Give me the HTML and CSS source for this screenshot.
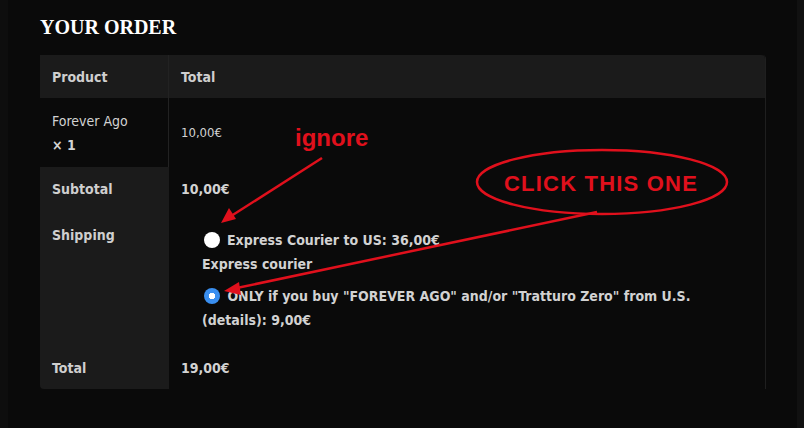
FILE: index.html
```html
<!DOCTYPE html>
<html lang="en">

<head>
  <meta charset="UTF-8">
  <meta name="viewport" content="width=device-width, initial-scale=1.0">
  <title>Your Order</title>
  <link rel="stylesheet" href="styles.css">
</head>

<body>
  <div class="page">
    <h3 class="order-title">YOUR ORDER</h3>

    <table class="order-table">
      <thead>
        <tr>
          <th class="col-product">Product</th>
          <th class="col-total">Total</th>
        </tr>
      </thead>
      <tbody>
        <tr class="cart-item">
          <td class="product-name">Forever Ago<br><strong>&times; 1</strong></td>
          <td class="product-total">10,00€</td>
        </tr>
      </tbody>
      <tfoot>
        <tr class="subtotal">
          <th>Subtotal</th>
          <td><strong>10,00€</strong></td>
        </tr>
        <tr class="shipping">
          <th>Shipping</th>
          <td>
            <ul class="shipping-methods">
              <li>
                <span class="radio"></span>
                <label>Express Courier to US: 36,00€</label>
              </li>
              <li class="method-name">Express courier</li>
              <li>
                <span class="radio checked"></span>
                <label>ONLY if you buy "FOREVER AGO" and/or "Tratturo Zero" from U.S. (details): 9,00€</label>
              </li>
            </ul>
          </td>
        </tr>
        <tr class="order-total">
          <th>Total</th>
          <td><strong>19,00€</strong></td>
        </tr>
      </tfoot>
    </table>

    <!-- red notes drawn over the screenshot -->
    <div class="notes">
      <svg width="804" height="428" viewBox="0 0 804 428">
        <line x1="322" y1="158" x2="228" y2="218" stroke="#e0101c" stroke-width="2.5" />
        <path d="M221 223 L229 208 L236 219 Z" fill="#e0101c" />
        <ellipse cx="602" cy="182" rx="125" ry="32" fill="none" stroke="#e0101c" stroke-width="2.5" />
        <line x1="597" y1="212" x2="232" y2="289" stroke="#e0101c" stroke-width="2.5" />
        <path d="M224 291 L239 282 L241 295 Z" fill="#e0101c" />
      </svg>
      <span class="note note-ignore">ignore</span>
      <span class="note note-click">CLICK THIS ONE</span>
    </div>
  </div>
</body>

</html>
```

FILE: styles.css
```css
body,
html {
  margin: 0;
  padding: 0;
  width: 100%;
  height: 100%;
  overflow: hidden;
  background-color: #0a0a0a;
}

.page {
  position: relative;
  height: 100%;
  box-sizing: border-box;
  padding: 16px 38px 0 32px;
  border-left: 8px solid #0e0e0e;
  border-right: 7px solid #111111;
  font-family: "DejaVu Sans Condensed", "DejaVu Sans", sans-serif;
  color: #d2d2d2;
}

.order-title {
  margin: 0 0 17px;
  font-family: "Liberation Serif", serif;
  font-size: 20px;
  font-weight: bold;
  line-height: 22px;
  color: #ffffff;
}

.order-table {
  width: 726px;
  border-collapse: separate;
  border-spacing: 0;
  border-right: 1px solid #1f1f1f;
  border-radius: 0 4px 0 0;
  font-size: 14px;
}

.order-table th,
.order-table td {
  text-align: left;
  padding: 0 12px;
}

.order-table thead th {
  height: 43px;
  background-color: #1b1b1b;
  color: #cfcfcf;
}

.order-table thead th.col-total {
  border-radius: 0 4px 0 0;
}

.col-product {
  width: 104px;
  border-right: 1px solid #222222;
}

.cart-item td {
  height: 69px;
  line-height: 24px;
}

.product-name {
  padding: 3px 12px 0 8px;
  border-right: 1px solid #222222;
  font-size: 14px;
}

.product-total {
  font-size: 13px;
  padding-top: 3px;
}

.order-table tfoot th {
  background-color: #1b1b1b;
  color: #cfcfcf;
  border-right: 1px solid #1b1b1b;
}

.order-table strong,
.order-table tfoot th,
.order-table thead th,
.shipping-methods {
  font-weight: bold;
}

.subtotal th,
.subtotal td {
  height: 43px;
}

.shipping th {
  vertical-align: top;
  padding-top: 17px;
}

.shipping td {
  height: 118px;
  padding-left: 33px;
  vertical-align: top;
  padding-top: 18px;
}

.shipping-methods {
  list-style: none;
  margin: 0;
  padding: 0;
  width: 500px;
  line-height: 24px;
}

.shipping-methods li {
  display: flex;
  align-items: flex-start;
  gap: 7px;
}

.shipping-methods .method-name {
  margin-bottom: 8px;
}

.radio {
  flex: none;
  width: 16px;
  height: 16px;
  margin: 4px 0 0 2px;
  border-radius: 50%;
  background-color: #ffffff;
  box-sizing: border-box;
}

.radio.checked {
  background-color: #3a8ff0;
  background-image: radial-gradient(circle, #ffffff 0 3px, #3a8ff0 3.5px);
}

.shipping-methods li:last-child {
  display: block;
}

.shipping-methods li:last-child .radio {
  display: inline-block;
  vertical-align: -3px;
  margin: 0 3px 0 2px;
}

.order-total th,
.order-total td {
  height: 43px;
}

.order-total th {
  border-radius: 0 0 0 4px;
}

.notes {
  position: absolute;
  top: 0;
  left: -8px;
  width: 804px;
  height: 428px;
  pointer-events: none;
}

.notes svg {
  position: absolute;
  top: 0;
  left: 0;
}

.note {
  position: absolute;
  font-family: "Liberation Sans", Arial, sans-serif;
  font-weight: bold;
  line-height: 24px;
  color: #e0101c;
}

.note-ignore {
  top: 126px;
  left: 295px;
  font-size: 24px;
}

.note-click {
  top: 172px;
  left: 504px;
  font-size: 22px;
  letter-spacing: 1.2px;
}
```
